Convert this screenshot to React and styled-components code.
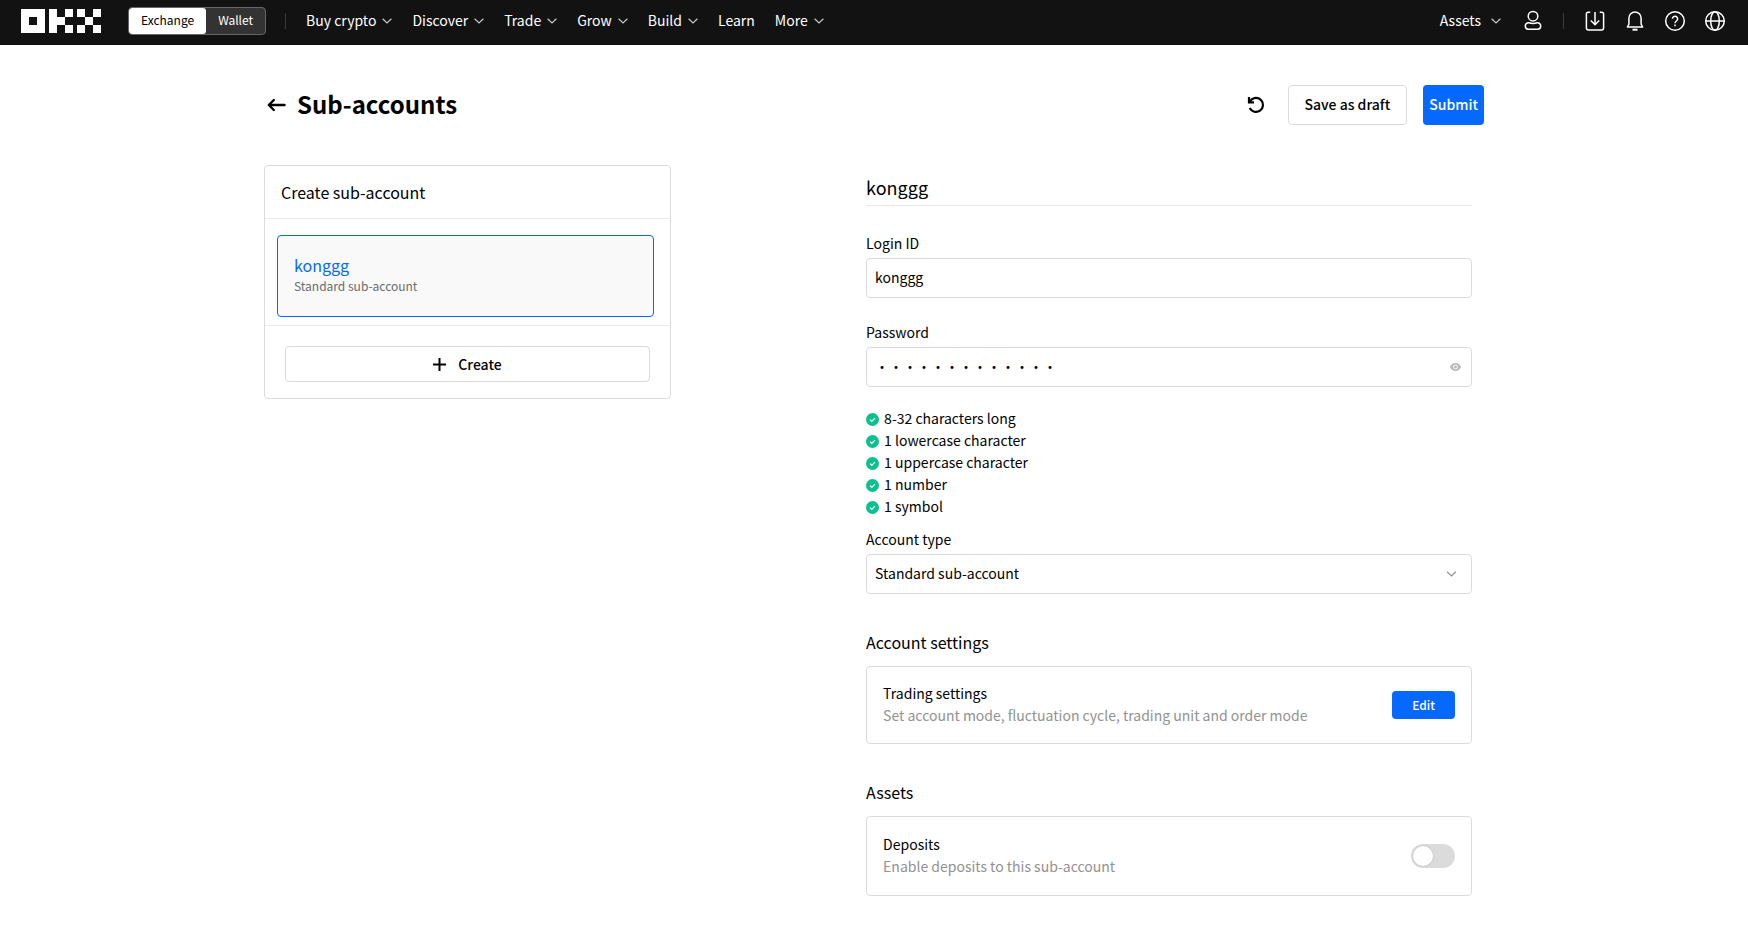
import { useState } from 'react';
import styled, { createGlobalStyle } from 'styled-components';

//Styles
const colors = {
  dark: '#121212',
  blue: '#0569ff',
  border: '#dbdbdb',
  line: '#ebebeb',
  grey: '#929292',
};

const GlobalStyle = createGlobalStyle`
  * {
    box-sizing: border-box;
  }

  body {
    margin: 0;
    background: #fff;
    color: #000;
    font-family: 'Noto Sans CJK SC', sans-serif;
    font-size: 14px;
    line-height: 20px;
  }

  h1, h2, h3, p, ul {
    margin: 0;
    padding: 0;
    font-weight: 400;
  }

  button, input, select {
    font-family: inherit;
    font-size: 14px;
    color: inherit;
  }

  button {
    padding: 0;
    border: 0;
    background: none;
    cursor: pointer;
  }

  svg {
    display: block;
    flex: none;
  }
`;

const Header = styled.header`
  display: flex;
  align-items: center;
  height: 45px;
  padding: 0 22px 4px 21px;
  background: ${colors.dark};
  color: #fff;
`;

const LogoLink = styled.a`
  margin-right: 27px;
  color: #fff;
`;

const Switcher = styled.div`
  display: flex;
  height: 28px;
  border: 1px solid #666;
  border-radius: 4px;
  background: #333;
  overflow: hidden;
`;

const SwitcherTab = styled.button`
  padding: 0 12px 1px;
  border-radius: 3px;
  background: ${({ $active }) => ($active ? '#fff' : 'transparent')};
  color: ${({ $active }) => ($active ? '#000' : '#fff')};
  font-size: 12px;
  line-height: 24px;
`;

const Divider = styled.span`
  width: 1px;
  height: 16px;
  margin: 0 20px 0 19px;
  background: #3b3b3b;
`;

const Nav = styled.nav`
  display: flex;
  align-items: center;
  gap: 20px;
`;

const NavLink = styled.a`
  display: flex;
  align-items: center;
  gap: ${({ $wide }) => ($wide ? '10px' : '6px')};
  color: #fff;
  text-decoration: none;
  white-space: nowrap;
`;

const NavText = styled.span`
  padding-bottom: 2px;
`;

const HeaderRight = styled.div`
  display: flex;
  align-items: center;
  margin-left: auto;
`;

const HeaderIcons = styled.div`
  display: flex;
  align-items: center;
  gap: 18px;
`;

const HeaderIcon = styled.button`
  display: flex;
  color: #fff;
`;

const UserIcon = styled(HeaderIcon)`
  margin-left: 21px;
`;

const Page = styled.main`
  width: 100%;
  max-width: 1220px;
  margin: 0 auto;
  padding: 40px 0 30px;
`;

const TitleBar = styled.div`
  display: flex;
  align-items: center;
  min-height: 40px;
  margin-bottom: 40px;
`;

const Back = styled.a`
  margin: 0 11px 0 3px;
  color: #000;
`;

const PageTitle = styled.h1`
  font-size: 24px;
  font-weight: 700;
  line-height: 32px;
  padding-bottom: 2px;
`;

const Actions = styled.div`
  display: flex;
  align-items: center;
  gap: 16px;
  margin-left: auto;
`;

const IconButton = styled.button`
  display: flex;
  padding: 7px;
`;

const Button = styled.button`
  height: 40px;
  padding: 0 ${({ $primary }) => ($primary ? '6px' : '16px')} 2px;
  border: ${({ $primary }) => ($primary ? '0' : `1px solid ${colors.border}`)};
  border-radius: 4px;
  background: ${({ $primary }) => ($primary ? colors.blue : '#fff')};
  color: ${({ $primary }) => ($primary ? '#fff' : '#000')};
  font-weight: 500;
`;

const SmallButton = styled(Button)`
  height: 28px;
  padding: 0 20px 2px;
  font-size: 12px;
`;

const Columns = styled.div`
  display: grid;
  grid-template-columns: minmax(0, 407fr) minmax(0, 618fr);
  column-gap: 16%;
  align-items: start;
`;

const Card = styled.section`
  border: 1px solid ${colors.border};
  border-radius: 4px;
`;

const CardTitle = styled.h2`
  padding: 14px 16px;
  font-size: 16px;
  line-height: 24px;
`;

const CardBody = styled.div`
  padding: 16px 16px 8px 12px;
  border-top: 1px solid ${colors.line};
`;

const CardFooter = styled.div`
  padding: 20px 20px 16px;
  border-top: 1px solid ${colors.line};
`;

const AccountItem = styled.button`
  display: flex;
  flex-direction: column;
  justify-content: center;
  width: 100%;
  height: 82px;
  padding: 0 16px 6px;
  border: 1px solid ${colors.blue};
  border-radius: 4px;
  background: #f9f9f9;
  text-align: left;
`;

const AccountName = styled.span`
  color: ${colors.blue};
  font-size: 16px;
  line-height: 24px;
`;

const AccountKind = styled.span`
  color: #6b6b6b;
  font-size: 12px;
  line-height: 17px;
`;

const CreateButton = styled(Button)`
  display: flex;
  align-items: center;
  justify-content: center;
  gap: 12px;
  width: 100%;
  height: 36px;
  padding: 0;
`;

const Form = styled.form`
  padding: 10px 12px 0 0;
`;

const FormTitle = styled.h2`
  padding-bottom: 6px;
  margin-bottom: 27px;
  border-bottom: 1px solid ${colors.line};
  font-size: 18px;
  line-height: 24px;
`;

const Field = styled.div`
  margin-bottom: 24px;
`;

const Label = styled.label`
  display: block;
  padding-bottom: 5px;
`;

const Control = styled.div`
  display: flex;
  align-items: center;
  height: 40px;
  padding-right: ${({ $inset }) => $inset || '0'};
  border: 1px solid ${colors.border};
  border-radius: 4px;
`;

const Input = styled.input`
  flex: 1;
  min-width: 0;
  height: 100%;
  padding: 0 8px 2px;
  border: 0;
  outline: 0;
  background: transparent;
`;

const SelectWrap = styled(Control)`
  display: grid;
  grid-template-columns: 1fr auto;

  select, svg {
    grid-row: 1;
  }

  select {
    grid-column: 1 / 3;
  }

  svg {
    grid-column: 2;
    margin-right: 14px;
    pointer-events: none;
  }
`;

const Select = styled.select`
  width: 100%;
  height: 38px;
  padding: 0 8px 2px;
  border: 0;
  outline: 0;
  background: transparent;
  appearance: none;
`;

const RuleList = styled.ul`
  margin: -3px 0 11px;
  list-style: none;
`;

const Rule = styled.li`
  display: flex;
  align-items: center;
  gap: 5px;
  height: 22px;
`;

const RuleText = styled.span`
  padding-bottom: 2px;
`;

const Section = styled.section`
  margin-top: 36px;
`;

const SectionTitle = styled.h3`
  margin-bottom: 12px;
  font-size: 16px;
  line-height: 24px;
`;

const Setting = styled.div`
  display: flex;
  align-items: center;
  justify-content: space-between;
  min-height: ${({ $tall }) => ($tall ? '80px' : '78px')};
  padding: 14px 16px;
  border: 1px solid ${colors.border};
  border-radius: 4px;
`;

const SettingText = styled.div`
  display: grid;
  gap: 2px;
  padding-bottom: 2px;
`;

const Hint = styled.p`
  color: ${colors.grey};
`;

const Toggle = styled.input`
  appearance: none;
  flex: none;
  width: 44px;
  height: 24px;
  margin: 0;
  padding: 2px;
  border-radius: 12px;
  background: ${colors.border};
  cursor: pointer;

  &::before {
    content: '';
    display: block;
    width: 20px;
    height: 20px;
    border-radius: 50%;
    background: #fff;
    box-shadow: 0 0 2px rgba(0, 0, 0, 0.2);
  }

  &:checked {
    background: ${colors.blue};
  }

  &:checked::before {
    margin-left: auto;
  }
`;

//Icons
const Logo = () => (
  <svg width='80' height='24' viewBox='0 0 10 3' fill='currentColor' shapeRendering='crispEdges'>
    <path d='M0 0h3v3H0zM1 1v1h1V1z' fillRule='evenodd' />
    <path d='M3.5 0h1v1h1v1h-1v1h-1zM5.5 0h1v1h-1zM5.5 2h1v1h-1z' />
    <path d='M7 0h1v1H7zM9 0h1v1H9zM8 1h1v1H8zM7 2h1v1H7zM9 2h1v1H9z' />
  </svg>
);

const Chevron = ({ color = '#c8c8c8', size = 10 }) => (
  <svg width={size} height='6' viewBox='0 0 10 6' fill='none' stroke={color} strokeWidth='1.2'>
    <path d='M0.6 0.7 5 4.9 9.4 0.7' />
  </svg>
);

const LineIcon = ({ width = 22, children }) => (
  <svg width={width} height='22' viewBox={`0 0 ${width} 22`} fill='none' stroke='currentColor' strokeWidth='1.5'>
    {children}
  </svg>
);

const Check = () => (
  <svg width='13' height='13' viewBox='0 0 13 13' fill='none'>
    <circle cx='6.5' cy='6.5' r='6.5' fill='#0ac18e' />
    <path d='M4 6.6 5.8 8.3 9 5.1' stroke='#fff' strokeWidth='1.2' />
  </svg>
);

const menu = ['Buy crypto', 'Discover', 'Trade', 'Grow', 'Build', 'Learn', 'More'];

const rules = [
  '8-32 characters long',
  '1 lowercase character',
  '1 uppercase character',
  '1 number',
  '1 symbol',
];

const TopBar = () => (
  <Header>
    <LogoLink href='#' aria-label='OKX'>
      <Logo />
    </LogoLink>
    <Switcher>
      <SwitcherTab $active>Exchange</SwitcherTab>
      <SwitcherTab>Wallet</SwitcherTab>
    </Switcher>
    <Divider />
    <Nav>
      {menu.map((item) => (
        <NavLink href='#' key={item}>
          <NavText>{item}</NavText>
          {item !== 'Learn' ? <Chevron /> : null}
        </NavLink>
      ))}
    </Nav>
    <HeaderRight>
      <NavLink href='#' $wide>
        <NavText>Assets</NavText>
        <Chevron />
      </NavLink>
      <UserIcon aria-label='Account'>
        <LineIcon>
          <circle cx='11' cy='6.2' r='4.8' />
          <path d='M6.8 12.8c2.7.9 5.7.9 8.4 0 2-.2 3.5 1.2 3.5 3.3 0 1.9-1.3 3.2-3 3.2H6.3c-1.7 0-3-1.3-3-3.2 0-2.1 1.5-3.5 3.5-3.3z' />
        </LineIcon>
      </UserIcon>
      <Divider />
      <HeaderIcons>
        <HeaderIcon aria-label='Download'>
          <LineIcon>
            <path d='M6.2 2.3H4.2A1.8 1.8 0 0 0 2.4 4.1v14a1.8 1.8 0 0 0 1.8 1.8h13.6a1.8 1.8 0 0 0 1.8-1.8v-14a1.8 1.8 0 0 0-1.8-1.8h-2' />
            <path d='M11 2v12.5M6.8 10.5l4.2 4.2 4.2-4.2' />
          </LineIcon>
        </HeaderIcon>
        <HeaderIcon aria-label='Notifications'>
          <LineIcon>
            <path d='M4.9 14.2V8.1a6.1 6.1 0 0 1 12.2 0v6.1l1.5 2.8H3.4z' strokeLinejoin='round' />
            <path d='M8.5 19.7h5' strokeWidth='2' />
          </LineIcon>
        </HeaderIcon>
        <HeaderIcon aria-label='Help'>
          <LineIcon>
            <circle cx='11' cy='11' r='9.3' />
            <path d='M8.4 8.8a2.6 2.6 0 1 1 4.3 2c-1 .8-1.7 1.2-1.7 2.5M11 14.6v1.7' />
          </LineIcon>
        </HeaderIcon>
        <HeaderIcon aria-label='Language'>
          <LineIcon>
            <circle cx='11' cy='11' r='9.3' />
            <ellipse cx='11' cy='11' rx='4.3' ry='9.3' />
            <path d='M1.7 11h18.6' />
          </LineIcon>
        </HeaderIcon>
      </HeaderIcons>
    </HeaderRight>
  </Header>
);

const App = () => {
  const [login, setLogin] = useState('konggg');
  const [visible, setVisible] = useState(false);

  return (
    <>
      <GlobalStyle />
      <TopBar />
      <Page>
        <TitleBar>
          <Back href='#' aria-label='Back'>
            <svg width='19' height='14' viewBox='0 0 19 14' fill='none' stroke='currentColor' strokeWidth='2.4' strokeLinecap='round' strokeLinejoin='round'>
              <path d='M6.8 2 1.8 7 6.8 12M2 7h15.5' />
            </svg>
          </Back>
          <PageTitle>Sub-accounts</PageTitle>
          <Actions>
            <IconButton aria-label='Reset'>
              <svg width='18' height='18' viewBox='0 0 18 18' fill='none' stroke='currentColor' strokeWidth='2.2'>
                <path d='M2.7 12A7 7 0 1 0 3.4 4.7L2 6.2' />
                <path d='M2 1v5.4h5' />
              </svg>
            </IconButton>
            <Button>Save as draft</Button>
            <Button $primary>Submit</Button>
          </Actions>
        </TitleBar>
        <Columns>
          <Card>
            <CardTitle>Create sub-account</CardTitle>
            <CardBody>
              <AccountItem>
                <AccountName>{login}</AccountName>
                <AccountKind>Standard sub-account</AccountKind>
              </AccountItem>
            </CardBody>
            <CardFooter>
              <CreateButton>
                <svg width='13' height='13' viewBox='0 0 13 13' stroke='currentColor' strokeWidth='2'>
                  <path d='M6.5 0v13M0 6.5h13' />
                </svg>
                Create
              </CreateButton>
            </CardFooter>
          </Card>
          <Form onSubmit={(e) => e.preventDefault()}>
            <FormTitle>{login}</FormTitle>
            <Field>
              <Label htmlFor='login'>Login ID</Label>
              <Control>
                <Input id='login' value={login} onChange={(e) => setLogin(e.target.value)} />
              </Control>
            </Field>
            <Field>
              <Label htmlFor='password'>Password</Label>
              <Control $inset='10px'>
                <Input id='password' type={visible ? 'text' : 'password'} defaultValue='Abcdefgh1234!' />
                <button type='button' aria-label='Show password' onClick={() => setVisible(!visible)}>
                  <svg width='11' height='8' viewBox='0 0 11 8'>
                    <path d='M0 4C1.2 1.4 3.2 0 5.5 0S9.8 1.4 11 4C9.8 6.6 7.8 8 5.5 8S1.2 6.6 0 4z' fill='#b8b8b8' />
                    <circle cx='5.5' cy='4' r='2' fill='#b8b8b8' stroke='#fff' />
                  </svg>
                </button>
              </Control>
            </Field>
            <RuleList>
              {rules.map((rule) => (
                <Rule key={rule}>
                  <Check />
                  <RuleText>{rule}</RuleText>
                </Rule>
              ))}
            </RuleList>
            <Label htmlFor='type'>Account type</Label>
            <SelectWrap>
              <Select id='type'>
                <option>Standard sub-account</option>
              </Select>
              <Chevron color='#929292' size={11} />
            </SelectWrap>
            <Section>
              <SectionTitle>Account settings</SectionTitle>
              <Setting>
                <SettingText>
                  <p>Trading settings</p>
                  <Hint>Set account mode, fluctuation cycle, trading unit and order mode</Hint>
                </SettingText>
                <SmallButton type='button' $primary>Edit</SmallButton>
              </Setting>
            </Section>
            <Section>
              <SectionTitle>Assets</SectionTitle>
              <Setting $tall>
                <SettingText>
                  <label htmlFor='deposits'>Deposits</label>
                  <Hint>Enable deposits to this sub-account</Hint>
                </SettingText>
                <Toggle id='deposits' type='checkbox' role='switch' />
              </Setting>
            </Section>
          </Form>
        </Columns>
      </Page>
    </>
  );
};

export default App;
